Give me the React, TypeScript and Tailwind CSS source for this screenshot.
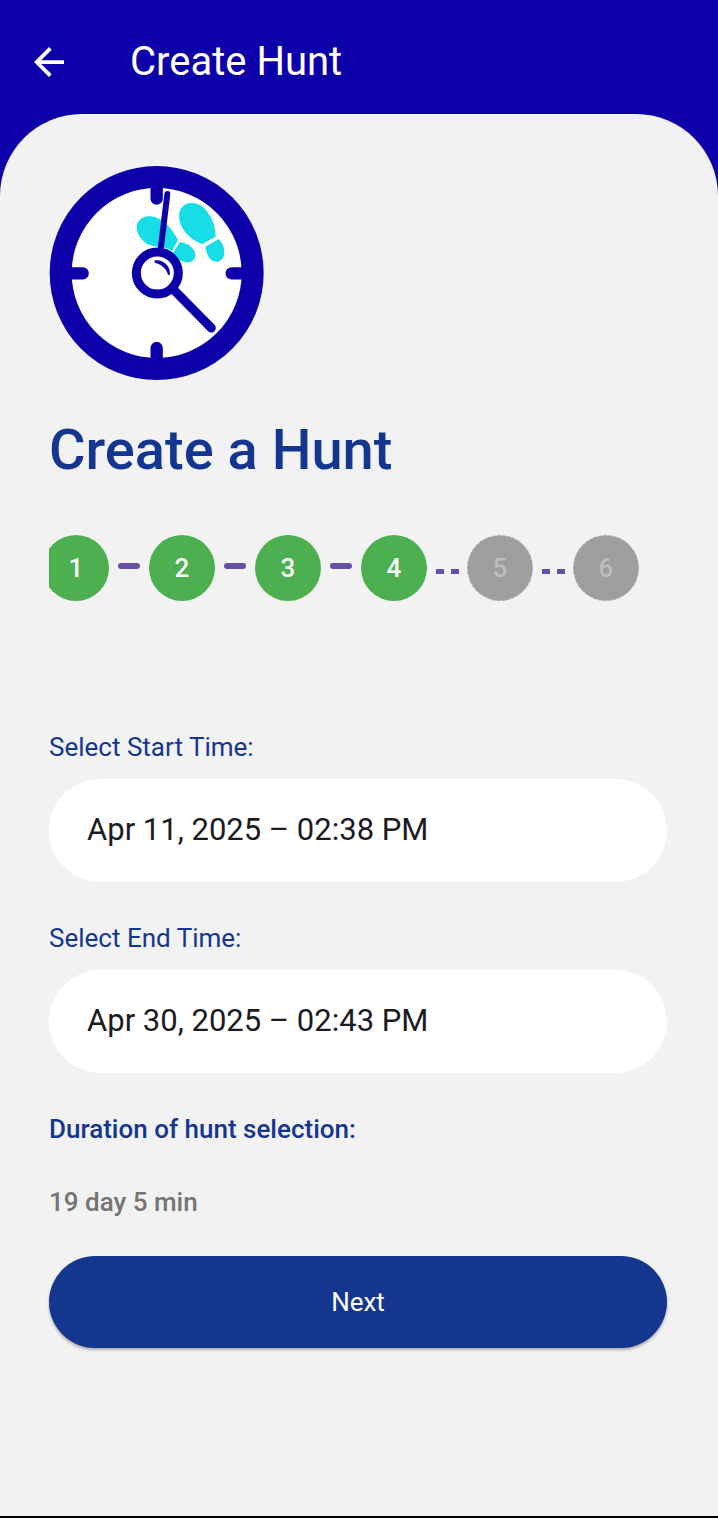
import { Fragment } from "react";

const steps = [
  { label: "1", done: true },
  { label: "2", done: true },
  { label: "3", done: true },
  { label: "4", done: true },
  { label: "5", done: false },
  { label: "6", done: false },
];

function HuntLogo() {
  return (
    <svg viewBox="27 27 648 648" className="size-[216px]" role="img" aria-label="Hunt clock">
      <circle cx="350" cy="351" r="288" fill="#fff" stroke="#0d00a8" strokeWidth="66" />
      <g fill="#17dde6">
        <path d="M291 222C286 198 304 180 330 181C352 183 367 193 382 207C396 221 405 236 414 252L396 285C370 268 347 277 322 264C305 253 294 239 291 222Z" />
        <path d="M419 259C440 260 461 273 466 293C468 309 457 319 439 319C420 317 407 305 399 291Z" />
        <path d="M418 190C413 162 429 141 454 141C482 141 500 160 513 185C522 202 527 221 527 242L487 264C463 256 443 240 431 222C424 211 420 201 418 190Z" />
        <path d="M496 272L536 249C550 262 556 283 551 300C547 315 534 320 521 316C505 311 500 291 496 272Z" />
      </g>
      <g stroke="#0d00a8" strokeLinecap="round" fill="none">
        <path d="M350 80V128M350 622V576M80 352H128M622 352H575" strokeWidth="37" />
        <path d="M382 114L363 272" strokeWidth="18" />
        <path d="M400 400L514 516" strokeWidth="27" />
      </g>
      <circle cx="352" cy="351" r="63" fill="#fff" stroke="#0d00a8" strokeWidth="27" />
      <path d="M344 313C371 309 394 332 389 358L384 356C379 337 366 326 344 320Z" fill="#0d00a8" />
    </svg>
  );
}

function Connector({ done }: { done: boolean }) {
  return done ? (
    <span className="flex h-[66px] w-10 shrink-0 items-center justify-center pb-1">
      <span className="h-1.5 w-[22px] rounded-full bg-[#6750a4]" />
    </span>
  ) : (
    <span className="flex h-[66px] w-10 shrink-0 items-center justify-center gap-[7px] pt-1.5">
      <span className="h-[5px] w-2 bg-[#6750a4]" />
      <span className="h-[5px] w-2 bg-[#6750a4]" />
    </span>
  );
}

function Stepper() {
  return (
    <div className="mt-[53px] overflow-hidden">
      <div className="-ml-1.5 flex">
        {steps.map((step, i) => (
          <Fragment key={step.label}>
            {i > 0 && <Connector done={step.done} />}
            <span
              className={
                step.done
                  ? "flex size-[66px] shrink-0 items-center justify-center rounded-full bg-[#4caf50] text-[26px] font-medium text-white"
                  : "flex size-[66px] shrink-0 items-center justify-center rounded-full border border-dashed border-[#bdbdbd] bg-[#9e9e9e] text-[26px] font-medium text-[#bdbdbd]"
              }
            >
              {step.label}
            </span>
          </Fragment>
        ))}
      </div>
    </div>
  );
}

function TimeField({ id, label, value }: { id: string; label: string; value: string }) {
  return (
    <div className="flex flex-col gap-4">
      <label htmlFor={id} className="text-[26px] leading-8 text-[#15368f]">
        {label}
      </label>
      <input
        id={id}
        type="text"
        readOnly
        defaultValue={value}
        className="h-[103px] w-full rounded-full bg-white px-[38px] pb-0.5 text-[31px] text-[#1c1b1f] outline-none"
      />
    </div>
  );
}

export default function App() {
  return (
    <div className="flex min-h-screen flex-col border-b-2 border-black bg-[#0d00a8] font-[Roboto,sans-serif]">
      <header className="flex h-[114px] items-center gap-[63px] pt-2.5 pl-[31px] text-white">
        <button type="button" aria-label="Back" className="flex size-9 items-center justify-center">
          <svg viewBox="4 4 16 16" className="size-[30px]" fill="currentColor" aria-hidden="true">
            <path d="M20 11H7.83l5.59-5.59L12 4l-8 8 8 8 1.41-1.41L7.83 13H20v-2z" />
          </svg>
        </button>
        <h1 className="text-[40px] leading-[48px]">Create Hunt</h1>
      </header>

      <main className="flex flex-1 flex-col rounded-t-[82px] bg-[#f2f2f2] pt-[51px] pr-[51px] pb-10 pl-[49px]">
        <HuntLogo />
        <h2 className="mt-[37px] text-[56px] leading-[64px] font-medium text-[#15368f]">Create a Hunt</h2>
        <Stepper />
        <div className="mt-[130px] flex flex-col gap-10">
          <TimeField id="start-time" label="Select Start Time:" value="Apr 11, 2025 – 02:38 PM" />
          <TimeField id="end-time" label="Select End Time:" value="Apr 30, 2025 – 02:43 PM" />
        </div>
        <p className="mt-10 text-[26px] leading-8 font-medium text-[#15368f]">Duration of hunt selection:</p>
        <p className="mt-[41px] text-[26px] leading-8 font-medium text-[#757575]">19 day 5 min</p>
        <button
          type="button"
          className="mt-[38px] h-[92px] w-full rounded-full bg-[#15368f] text-[26px] text-white shadow-[0_2px_3px_rgba(0,0,0,0.3)]"
        >
          Next
        </button>
      </main>
    </div>
  );
}
